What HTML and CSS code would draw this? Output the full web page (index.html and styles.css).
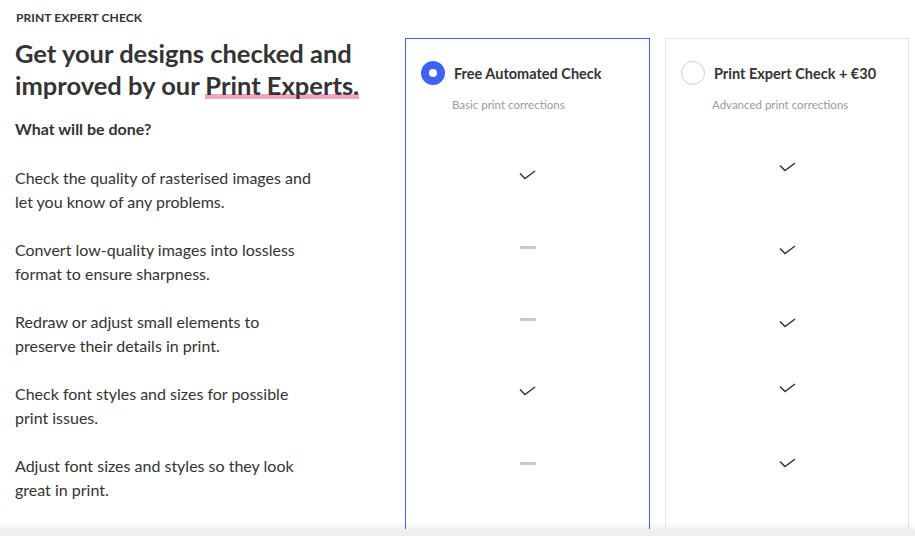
FILE: index.html
```html
<!DOCTYPE html>
<html>
<head>
<meta charset="utf-8">
<link rel="stylesheet" href="styles.css">
</head>
<body>
<main class="page">
  <section class="intro">
    <div class="eyebrow">PRINT EXPERT CHECK</div>
    <h1 class="title">Get your designs checked and improved by our <span class="mark">Print Experts.</span></h1>
    <h2 class="subtitle">What will be done?</h2>
    <ul class="features">
      <li class="feature">Check the quality of rasterised images and let you know of any problems.</li>
      <li class="feature">Convert low-quality images into lossless format to ensure sharpness.</li>
      <li class="feature">Redraw or adjust small elements to preserve their details in print.</li>
      <li class="feature">Check font styles and sizes for possible print issues.</li>
      <li class="feature">Adjust font sizes and styles so they look great in print.</li>
    </ul>
  </section>

  <section class="plan plan-selected">
    <div class="plan-head">
      <span class="radio radio-on"></span>
      <span class="plan-name">Free Automated Check</span>
    </div>
    <div class="plan-desc">Basic print corrections</div>
    <div class="cells">
      <div class="cell"><svg class="check" viewBox="0 0 17 10"><path d="M1 3.5 L6 8.5 L16 1" /></svg></div>
      <div class="cell"><span class="dash"></span></div>
      <div class="cell"><span class="dash"></span></div>
      <div class="cell"><svg class="check" viewBox="0 0 17 10"><path d="M1 3.5 L6 8.5 L16 1" /></svg></div>
      <div class="cell"><span class="dash"></span></div>
    </div>
  </section>

  <section class="plan">
    <div class="plan-head">
      <span class="radio"></span>
      <span class="plan-name">Print Expert Check + €30</span>
    </div>
    <div class="plan-desc">Advanced print corrections</div>
    <div class="cells">
      <div class="cell cell-hi"><svg class="check" viewBox="0 0 17 10"><path d="M1 3.5 L6 8.5 L16 1" /></svg></div>
      <div class="cell cell-lo3"><svg class="check" viewBox="0 0 17 10"><path d="M1 3.5 L6 8.5 L16 1" /></svg></div>
      <div class="cell cell-lo4"><svg class="check" viewBox="0 0 17 10"><path d="M1 3.5 L6 8.5 L16 1" /></svg></div>
      <div class="cell cell-hi3"><svg class="check" viewBox="0 0 17 10"><path d="M1 3.5 L6 8.5 L16 1" /></svg></div>
      <div class="cell"><svg class="check" viewBox="0 0 17 10"><path d="M1 3.5 L6 8.5 L16 1" /></svg></div>
    </div>
  </section>
</main>
<footer class="bottom-bar"></footer>
</body>
</html>
```

FILE: styles.css
```css
* { box-sizing: border-box; }
html, body { margin: 0; padding: 0; background: #fff; }
body {
  font-family: Lato, "Noto Sans", "Liberation Sans", sans-serif;
  color: #333;
  width: 915px;
  height: 536px;
  overflow: hidden;
}
.page {
  display: grid;
  grid-template-columns: 390px 245px 244px;
  column-gap: 15px;
  align-items: start;
}
.intro {
  padding: 10px 0 0 15px;
}
.eyebrow {
  font-size: 12px;
  font-weight: 700;
  letter-spacing: 0.1px;
  color: #333;
  line-height: 16px;
  padding-left: 1px;
}
.title {
  margin: 11px 0 0;
  font-size: 25.5px;
  line-height: 32px;
  font-weight: 700;
  color: #333;
  width: 370px;
}
.mark {
  background: linear-gradient(#f4a3c6, #f4a3c6) no-repeat left 24px / 100% 5px;
}
.subtitle {
  margin: 18px 0 0;
  font-size: 16px;
  line-height: 20px;
  font-weight: 700;
  color: #333;
}
.features {
  list-style: none;
  margin: 27px 0 0;
  padding: 0;
}
.feature {
  height: 72px;
  width: 306px;
  font-size: 16px;
  line-height: 23.5px;
  color: #333;
}
.plan {
  margin-top: 38px;
  height: 520px;
  border: 1px solid #e6e6e6;
  border-bottom: none;
  padding: 22px 0 0 15px;
}
.plan-selected {
  border-color: #3d63f5;
}
.plan-head {
  display: flex;
  align-items: center;
  gap: 9px;
  height: 24px;
}
.radio {
  width: 24px;
  height: 24px;
  border-radius: 50%;
  border: 1px solid #cfcfcf;
  background: #fff;
  flex: none;
}
.radio-on {
  border: 8px solid #3d63f5;
}
.plan-name {
  font-size: 14.5px;
  font-weight: 700;
  color: #333;
}
.plan-desc {
  margin: 13px 0 0 31px;
  font-size: 11.5px;
  line-height: 14px;
  color: #9b9b9b;
}
.cells {
  margin: 50px 0 0 -15px;
}
.cell {
  height: 72px;
  padding-top: 8px;
  display: flex;
  justify-content: center;
  align-items: flex-start;
}
.cell-hi { padding-top: 0; }
.cell-lo3 { padding-top: 11px; }
.cell-lo4 { padding-top: 12px; }
.cell-hi3 { padding-top: 5px; }
.check {
  width: 17px;
  height: 10px;
  fill: none;
  stroke: #333;
  stroke-width: 1.5;
}
.dash {
  width: 16px;
  height: 3px;
  margin-top: 4px;
  background: #c8c8c8;
  border-radius: 1px;
}
.bottom-bar {
  position: fixed;
  left: 0;
  right: 0;
  top: 529px;
  height: 20px;
  background: #efefef;
  box-shadow: 0 -2px 6px rgba(0,0,0,0.08);
}
```
